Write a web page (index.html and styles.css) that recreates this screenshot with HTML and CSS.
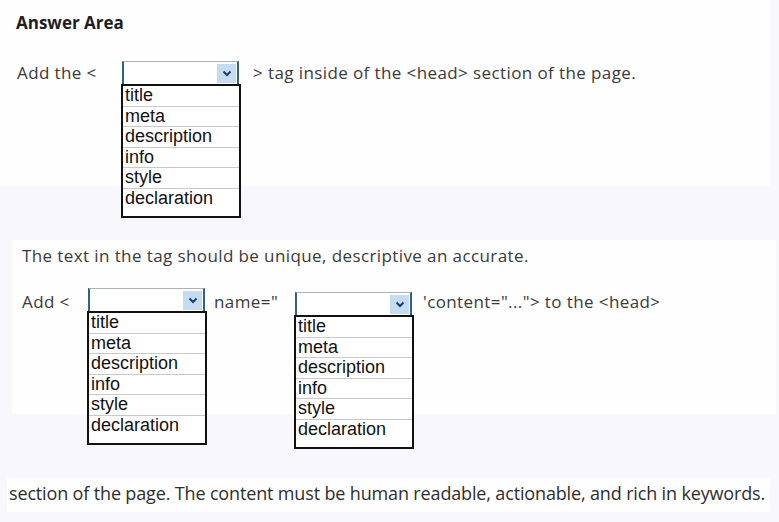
FILE: index.html
```html
<!DOCTYPE html>
<html lang="en">
<head>
  <meta charset="UTF-8" />
  <title>Answer Area</title>
  <link rel="stylesheet" href="styles.css">
</head>
<body>

  <div class="panel panel-top">
    <h3 class="title">Answer Area</h3>
    <div class="row row-first">
      <span class="text lead">Add the &lt;</span>
      <div class="picker">
        <div class="select">
          <span class="arrow">
            <svg width="10" height="7" viewBox="0 0 10 7"><path d="M1.5 1.5 L5 5 L8.5 1.5" fill="none" stroke="#1d3c6b" stroke-width="2"/></svg>
          </span>
        </div>
        <ul class="options">
          <li>title</li>
          <li>meta</li>
          <li>description</li>
          <li>info</li>
          <li>style</li>
          <li>declaration</li>
        </ul>
      </div>
      <span class="text after">&gt; tag inside of the &lt;head&gt; section of the page.</span>
    </div>
  </div>

  <div class="panel panel-mid">
    <p class="text intro">The text in the tag should be unique, descriptive an accurate.</p>
    <div class="row row-second">
      <span class="text lead-short">Add &lt;</span>
      <div class="picker">
        <div class="select">
          <span class="arrow">
            <svg width="10" height="7" viewBox="0 0 10 7"><path d="M1.5 1.5 L5 5 L8.5 1.5" fill="none" stroke="#1d3c6b" stroke-width="2"/></svg>
          </span>
        </div>
        <ul class="options">
          <li>title</li>
          <li>meta</li>
          <li>description</li>
          <li>info</li>
          <li>style</li>
          <li>declaration</li>
        </ul>
      </div>
      <span class="text name">name="</span>
      <div class="picker picker-low">
        <div class="select">
          <span class="arrow">
            <svg width="10" height="7" viewBox="0 0 10 7"><path d="M1.5 1.5 L5 5 L8.5 1.5" fill="none" stroke="#1d3c6b" stroke-width="2"/></svg>
          </span>
        </div>
        <ul class="options">
          <li>title</li>
          <li>meta</li>
          <li>description</li>
          <li>info</li>
          <li>style</li>
          <li>declaration</li>
        </ul>
      </div>
      <span class="text content">'content="..."&gt; to the &lt;head&gt;</span>
    </div>
  </div>

  <div class="panel panel-bottom">
    <p class="text closing">section of the page. The content must be human readable, actionable, and rich in keywords.</p>
  </div>

</body>
</html>
```

FILE: styles.css
```css
* {
  box-sizing: border-box;
}

body {
  margin: 0;
  background: #f8f7fb;
  font-family: "Open Sans", "Noto Sans", sans-serif;
  color: #3a3a3a;
}

.panel {
  background: #fefefe;
}

.panel-top {
  width: 770px;
  height: 186px;
  padding: 12px 16px 0;
}

.title {
  margin: 0;
  font-size: 17px;
  font-weight: bold;
  color: #1e1e1e;
  line-height: 21px;
}

.text {
  font-size: 17px;
  letter-spacing: 0.4px;
  line-height: 23px;
  white-space: nowrap;
}

.row {
  display: flex;
  align-items: flex-start;
}

.row-first {
  margin-top: 28px;
}

.lead {
  width: 106px;
  padding-left: 1px;
}

.after {
  margin-left: 14px;
}

/* dropdown with its open option list */
.picker {
  width: 117px;
}

.select {
  height: 23px;
  background: #fff;
  border-top: 1px solid #a9b1b9;
  border-left: 2px solid #33617f;
  border-right: 2px solid #33617f;
  display: flex;
  justify-content: flex-end;
  padding: 2px 1px 0;
}

.arrow {
  width: 19px;
  height: 19px;
  background: #c5dbf2;
  display: flex;
  align-items: center;
  justify-content: center;
}

.options {
  list-style: none;
  margin: 0 -2px 0 -1px;
  padding: 0 0 4px;
  border: 2px solid #111;
  background: #fff;
  font-family: "Liberation Sans", Arial, sans-serif;
  font-size: 18px;
  letter-spacing: 0;
  color: #111;
}

.options li {
  height: 20.6px;
  line-height: 19px;
  padding-left: 2px;
  border-bottom: 1px solid #c9c9c9;
}

.options li:last-child {
  border-bottom: none;
  height: 23px;
}

.panel-mid {
  width: 764px;
  height: 174px;
  margin: 54px 0 0 12px;
  padding: 4px 10px 0;
}

.intro {
  margin: 0 0 21px;
}

.row-second .text {
  padding-top: 2px;
}

.lead-short {
  width: 66px;
}

.name {
  margin-left: 9px;
  width: 81px;
}

.picker-low {
  margin-top: 4px;
}

.content {
  margin-left: 11px;
}

.panel-bottom {
  width: 763px;
  height: 34px;
  margin: 64px 0 0 7px;
  padding: 4px 2px 0;
}

.closing {
  margin: 0;
  font-size: 18px;
  letter-spacing: -0.15px;
  color: #2e2e2e;
}
```
